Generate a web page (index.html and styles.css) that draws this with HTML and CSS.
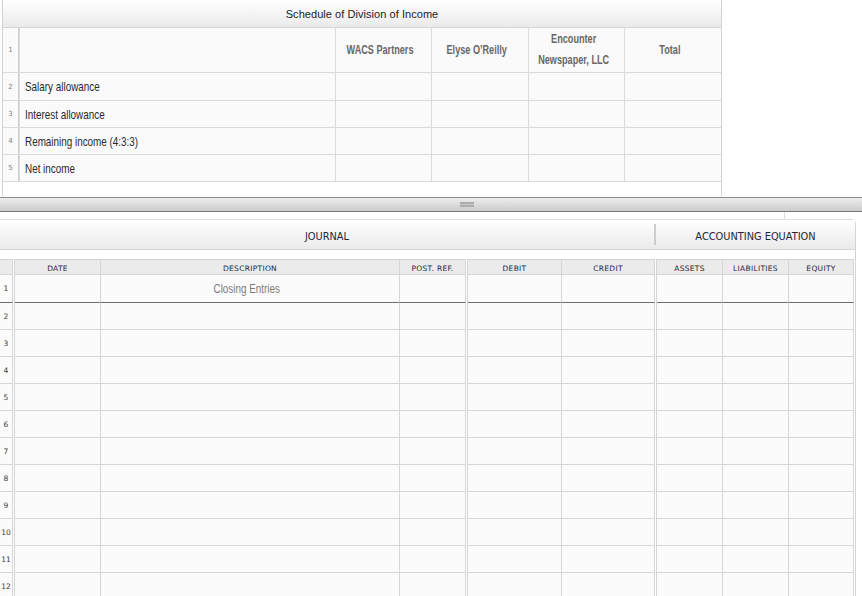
FILE: index.html
```html
<!DOCTYPE html>
<html>
<head>
<meta charset="utf-8">
<link rel="stylesheet" href="styles.css">
</head>
<body>
<section class="schedule">
  <div class="sched-title">Schedule of Division of Income</div>
  <div class="sched-grid">
    <div class="sc sc-num">1</div><div class="sc sc-label"></div>
    <div class="sc sc-head"><span class="nw">WACS Partners</span></div><div class="sc sc-head"><span class="nw">Elyse O’Reilly</span></div><div class="sc sc-head"><span class="nw">Encounter<br>Newspaper, LLC</span></div><div class="sc sc-head"><span class="nw">Total</span></div>
    <div class="sc sc-num">2</div><div class="sc sc-label"><span class="nw">Salary allowance</span></div><div class="sc"></div><div class="sc"></div><div class="sc"></div><div class="sc"></div>
    <div class="sc sc-num">3</div><div class="sc sc-label"><span class="nw">Interest allowance</span></div><div class="sc"></div><div class="sc"></div><div class="sc"></div><div class="sc"></div>
    <div class="sc sc-num">4</div><div class="sc sc-label"><span class="nw">Remaining income (4:3:3)</span></div><div class="sc"></div><div class="sc"></div><div class="sc"></div><div class="sc"></div>
    <div class="sc sc-num">5</div><div class="sc sc-label"><span class="nw">Net income</span></div><div class="sc"></div><div class="sc"></div><div class="sc"></div><div class="sc"></div>
  </div>
</section>
<div class="splitter"><span class="grip"></span></div>
<div class="tabstrip"><div class="tab-edge"></div></div>
<section class="journal">
  <div class="jhead">
    <div class="jh-journal">JOURNAL</div>
    <div class="jh-sep"></div>
    <div class="jh-eq">ACCOUNTING EQUATION</div>
  </div>
  <div class="jbody">
    <div class="jg jg-n">
      <div class="jc jh"></div>
      <div class="jc jn r1">1</div><div class="jc jn">2</div><div class="jc jn">3</div><div class="jc jn">4</div><div class="jc jn">5</div><div class="jc jn">6</div><div class="jc jn">7</div><div class="jc jn">8</div><div class="jc jn">9</div><div class="jc jn">10</div><div class="jc jn">11</div><div class="jc jn">12</div>
    </div>
    <div class="jg jg-a">
      <div class="jc jh">DATE</div><div class="jc jh">DESCRIPTION</div><div class="jc jh">POST. REF.</div>
      <div class="jc r1"></div><div class="jc r1 jdesc"><span class="nw">Closing Entries</span></div><div class="jc r1"></div>
      <div class="jc"></div><div class="jc"></div><div class="jc"></div>
      <div class="jc"></div><div class="jc"></div><div class="jc"></div>
      <div class="jc"></div><div class="jc"></div><div class="jc"></div>
      <div class="jc"></div><div class="jc"></div><div class="jc"></div>
      <div class="jc"></div><div class="jc"></div><div class="jc"></div>
      <div class="jc"></div><div class="jc"></div><div class="jc"></div>
      <div class="jc"></div><div class="jc"></div><div class="jc"></div>
      <div class="jc"></div><div class="jc"></div><div class="jc"></div>
      <div class="jc"></div><div class="jc"></div><div class="jc"></div>
      <div class="jc"></div><div class="jc"></div><div class="jc"></div>
      <div class="jc"></div><div class="jc"></div><div class="jc"></div>
    </div>
    <div class="jg jg-b">
      <div class="jc jh">DEBIT</div><div class="jc jh">CREDIT</div>
      <div class="jc r1"></div><div class="jc r1"></div>
      <div class="jc"></div><div class="jc"></div>
      <div class="jc"></div><div class="jc"></div>
      <div class="jc"></div><div class="jc"></div>
      <div class="jc"></div><div class="jc"></div>
      <div class="jc"></div><div class="jc"></div>
      <div class="jc"></div><div class="jc"></div>
      <div class="jc"></div><div class="jc"></div>
      <div class="jc"></div><div class="jc"></div>
      <div class="jc"></div><div class="jc"></div>
      <div class="jc"></div><div class="jc"></div>
      <div class="jc"></div><div class="jc"></div>
    </div>
    <div class="jg jg-c">
      <div class="jc jh">ASSETS</div><div class="jc jh">LIABILITIES</div><div class="jc jh">EQUITY</div>
      <div class="jc r1"></div><div class="jc r1"></div><div class="jc r1"></div>
      <div class="jc"></div><div class="jc"></div><div class="jc"></div>
      <div class="jc"></div><div class="jc"></div><div class="jc"></div>
      <div class="jc"></div><div class="jc"></div><div class="jc"></div>
      <div class="jc"></div><div class="jc"></div><div class="jc"></div>
      <div class="jc"></div><div class="jc"></div><div class="jc"></div>
      <div class="jc"></div><div class="jc"></div><div class="jc"></div>
      <div class="jc"></div><div class="jc"></div><div class="jc"></div>
      <div class="jc"></div><div class="jc"></div><div class="jc"></div>
      <div class="jc"></div><div class="jc"></div><div class="jc"></div>
      <div class="jc"></div><div class="jc"></div><div class="jc"></div>
      <div class="jc"></div><div class="jc"></div><div class="jc"></div>
    </div>
  </div>
</section>
</body>
</html>
```
FILE: styles.css
```css
* { box-sizing: border-box; }
html, body { margin: 0; padding: 0; }
body {
  width: 862px;
  height: 596px;
  overflow: hidden;
  background: #fff;
  font-family: "Liberation Sans", Arial, sans-serif;
}

/* narrow text: Arial scaled horizontally (Arial Narrow look) */
.nw {
  display: inline-block;
  white-space: nowrap;
  transform: scaleX(0.76);
}

/* ---------- schedule panel ---------- */
.schedule {
  margin-left: 2px;
  width: 720px;
  height: 197px;
  border-left: 1px solid #d2d2d2;
  border-right: 1px solid #d2d2d2;
  border-radius: 0 0 3px 3px;
  background: #fff;
}
.sched-title {
  height: 28px;
  border-bottom: 1px solid #d4d4d4;
  background: linear-gradient(#ffffff, #eaeaea);
  font: 11px/28px "Liberation Sans", Arial, sans-serif;
  letter-spacing: 0.05px;
  color: #1c1c1c;
  text-align: center;
}
.sched-grid {
  display: grid;
  grid-template-columns: 16px 315px 95px 96px 95px 96px;
  grid-template-rows: 44px 27px 26px 26px 26px;
  gap: 1px;
  background: #dadada;
  border-bottom: 1px solid #dadada;
}
.sc {
  background: #fafafa;
  display: flex;
  align-items: center;
}
.sc-num {
  border-right: 1px solid #cfcfcf;
  justify-content: center;
  font: 7px "DejaVu Sans", sans-serif;
  color: #7e7e7e;
}
.sc-label {
  padding-left: 5px;
  font-size: 13px;
  color: #2a2a2a;
}
.sc-label .nw { transform-origin: left center; }
.sc-head {
  justify-content: center;
  text-align: center;
  padding-right: 6px;
  font-weight: bold;
  font-size: 12px;
  line-height: 21px;
  color: #676767;
}

/* ---------- splitter ---------- */
.splitter {
  height: 15px;
  border-top: 1px solid #8d8d8d;
  border-bottom: 1px solid #7a7a7a;
  background: linear-gradient(#ececec, #cccccc);
  display: flex;
  align-items: center;
  padding-left: 460px;
}
.grip {
  width: 14px;
  height: 5px;
  border-top: 2px solid #acacac;
  border-bottom: 2px solid #acacac;
  background: #c9c9c9;
}
.tabstrip {
  height: 7px;
}
.tab-edge {
  width: 785px;
  height: 100%;
  border-right: 1px solid #dcdcdc;
}

/* ---------- journal panel ---------- */
.journal {
  width: 856px;
  border-top: 1px solid #dedede;
  border-right: 1px solid #d4d4d4;
  border-top-right-radius: 5px;
}
.jhead {
  display: flex;
  align-items: center;
  height: 30px;
  padding-top: 3px;
  border-bottom: 1px solid #d6d6d6;
  background: linear-gradient(#ffffff, #eaeaea);
  font: 9.8px "DejaVu Sans", sans-serif;
  color: #1d2637;
}
.jh-journal { width: 654px; text-align: center; }
.jh-sep { width: 2px; height: 21px; margin-top: -3px; background: #cdcdcd; }
.jh-eq { flex: 1; text-align: center; }

.jbody {
  display: flex;
  gap: 1px;
  padding-top: 9px;
}
.jg {
  display: grid;
  border-top: 1px solid #d4d4d4;
  grid-template-rows: 15px 28px;
  grid-auto-rows: 27px;
}
.jg-n { grid-template-columns: 13px; }
.jg-a { border-left: 1px solid #d4d4d4; grid-template-columns: 86px 299px 66px; }
.jg-b { border-left: 1px solid #d4d4d4; grid-template-columns: 94px 93px; }
.jg-c { border-left: 1px solid #d4d4d4; grid-template-columns: 66px 66px 65px; }

.jc {
  background: #fbfbfb;
  border-right: 1px solid #d6d6d6;
  border-bottom: 1px solid #d6d6d6;
}
.jh {
  background: #ebebeb;
  padding-top: 2px;
  font: 7.5px/13px "DejaVu Sans", sans-serif;
  letter-spacing: 0.3px;
  text-align: center;
  color: #1f2533;
}
.r1 { border-bottom-color: #6f6f6f; }
.jn {
  display: flex;
  align-items: center;
  justify-content: center;
  font: 7.5px "DejaVu Sans", sans-serif;
  color: #3a3a3a;
}
.jdesc {
  display: flex;
  align-items: center;
  justify-content: center;
  padding-right: 6px;
  font-size: 13px;
  color: #7b7b7b;
}
```
